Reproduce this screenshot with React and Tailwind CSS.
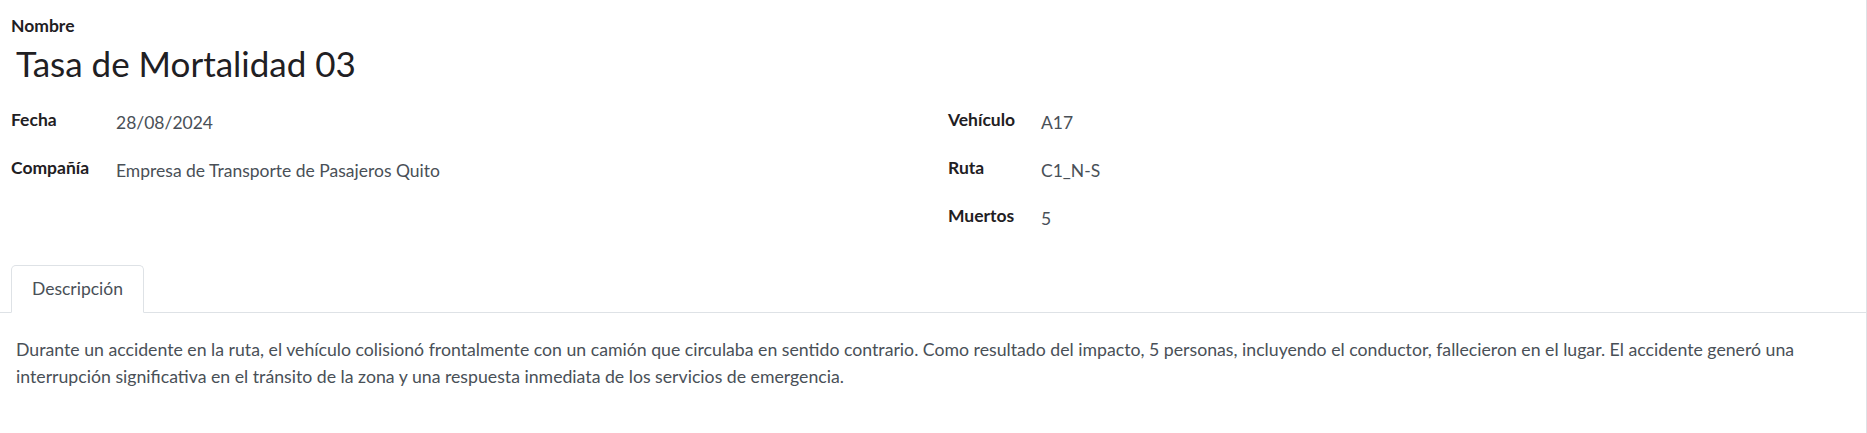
import React from 'react'

const font = { fontFamily: '"Lato", "Open Sans", sans-serif' }

function Field({ label, value, labelWidth }) {
    return (
        <div className="flex items-start h-[48px]">
            <div className={`${labelWidth} shrink-0 text-[17.5px] leading-[24px] font-bold text-[#1f2023]`}>{label}</div>
            <div className="mt-[3px] text-[17.5px] leading-[24px] text-[#495057]">{value}</div>
        </div>
    )
}

export default function App() {
    return (
        <div className="min-h-screen w-full bg-white border-r border-[#dee2e6]" style={font}>
            <div className="pl-[11px] pr-[11px] pt-[14px]">
                <div className="text-[17.5px] leading-[24px] font-bold text-[#1f2023]">Nombre</div>
                <h1 className="mt-[4px] pl-[5px] text-[35px] leading-[42px] text-[#1f2023]">Tasa de Mortalidad 03</h1>

                <div className="grid grid-cols-2 gap-x-[30px] mt-[24px]">
                    <div className="flex flex-col">
                        <Field label="Fecha" value="28/08/2024" labelWidth="w-[105px]" />
                        <Field label="Compañía" value="Empresa de Transporte de Pasajeros Quito" labelWidth="w-[105px]" />
                    </div>
                    <div className="flex flex-col">
                        <Field label="Vehículo" value="A17" labelWidth="w-[93px]" />
                        <Field label="Ruta" value="C1_N-S" labelWidth="w-[93px]" />
                        <Field label="Muertos" value="5" labelWidth="w-[93px]" />
                    </div>
                </div>
            </div>

            <div className="mt-[13px] flex border-b border-[#dee2e6] pl-[11px]">
                <button
                    type="button"
                    className="-mb-px h-[48px] px-[20px] bg-white border border-[#dee2e6] border-b-white rounded-t-[5px] text-[17.5px] text-[#495057]"
                >
                    Descripción
                </button>
            </div>

            <div className="pl-[16px] pr-[16px] pt-[23px] pb-[40px]">
                <p className="text-[17.7px] leading-[27px] text-[#495057]">
                    Durante un accidente en la ruta, el vehículo colisionó frontalmente con un camión que circulaba en sentido contrario. Como resultado del impacto, 5 personas, incluyendo el conductor, fallecieron en el lugar. El accidente generó una interrupción significativa en el tránsito de la zona y una respuesta inmediata de los servicios de emergencia.
                </p>
            </div>
        </div>
    )
}
